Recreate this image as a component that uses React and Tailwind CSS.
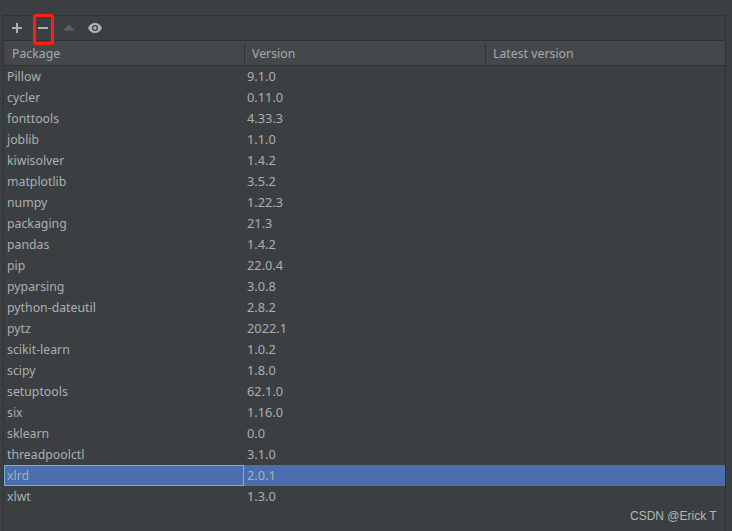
import React from 'react';

const PACKAGES = [
  ['Pillow', '9.1.0'],
  ['cycler', '0.11.0'],
  ['fonttools', '4.33.3'],
  ['joblib', '1.1.0'],
  ['kiwisolver', '1.4.2'],
  ['matplotlib', '3.5.2'],
  ['numpy', '1.22.3'],
  ['packaging', '21.3'],
  ['pandas', '1.4.2'],
  ['pip', '22.0.4'],
  ['pyparsing', '3.0.8'],
  ['python-dateutil', '2.8.2'],
  ['pytz', '2022.1'],
  ['scikit-learn', '1.0.2'],
  ['scipy', '1.8.0'],
  ['setuptools', '62.1.0'],
  ['six', '1.16.0'],
  ['sklearn', '0.0'],
  ['threadpoolctl', '3.1.0'],
  ['xlrd', '2.0.1'],
  ['xlwt', '1.3.0'],
];

function PackageRow({ name, version }) {
  const selected = name === 'xlrd';
  return (
    <div className={`flex h-[21px] items-center ${selected ? 'bg-[#4b6eaf]' : ''}`}>
      <div className={`h-full w-[240px] shrink-0 ${selected ? 'border border-[#75aee0] pl-[2px] leading-[20px]' : 'pl-[3px] leading-[22px]'}`}>
        {name}
      </div>
      <div className="h-full pl-[3px] text-[12.800px] leading-[21px]">{version}</div>
    </div>
  );
}

export default function App() {
  return (
    <div className="relative h-[531px] w-[732px] overflow-hidden bg-[#3c3f41] pt-[15px] pl-[3px] pr-[6px] font-['Noto_Sans',sans-serif] text-[12.300px] text-[#a9b0b4]">
      <div className="h-[516px] border-x border-t border-[#323232]">
        {/* Toolbar */}
        <div className="flex h-[25px] items-center border-b border-[#323232] pl-[7px]">
          <svg width="12" height="12" viewBox="0 0 12 12" className="mr-[14px]">
            <path d="M5 1h2v4h4v2H7v4H5V7H1V5h4z" fill="#afb1b3" />
          </svg>
          <svg width="12" height="12" viewBox="0 0 12 12" className="mr-[14px]">
            <path d="M1 5h10v2H1z" fill="#afb1b3" />
          </svg>
          <svg width="12" height="12" viewBox="0 0 12 12" className="mr-[13px]">
            <path d="M6 2.500l6 6H0z" fill="#5d5f60" />
          </svg>
          <svg width="14" height="12" viewBox="0 0 14 12">
            <path fillRule="evenodd" d="M7 1C3.800 1 1.200 3 0 6c1.200 3 3.800 5 7 5s5.800-2 7-5c-1.200-3-3.800-5-7-5zm0 2a3 3 0 1 1 0 6 3 3 0 0 1 0-6z" fill="#afb1b3" />
            <circle cx="7" cy="6" r="1.700" fill="#afb1b3" />
          </svg>
        </div>

        {/* Column headers */}
        <div className="flex h-[25px] items-center border-b border-[#323232] bg-[#45484a] text-[#a4abaf]">
          <div className="h-[21px] w-[241px] shrink-0 border-r border-[#323232] pl-[8px] leading-[21px]">Package</div>
          <div className="h-[21px] w-[241px] shrink-0 border-r border-[#323232] pl-[7px] leading-[21px]">Version</div>
          <div className="pl-[7px] leading-[21px]">Latest version</div>
        </div>

        {PACKAGES.map(([name, version]) => (
          <PackageRow key={name} name={name} version={version} />
        ))}
      </div>

      {/* Annotation around the remove button */}
      <div className="absolute left-[33px] top-[14px] h-[31px] w-[21px] rounded-[3px] border-[3px] border-[#fe1f14]" />

      {/* Watermark */}
      <div className="absolute left-[630px] top-[508px] font-['Liberation_Sans',sans-serif] text-[12px] leading-[16px] text-[#b4b6b7]">
        CSDN @Erick T
      </div>
    </div>
  );
}
